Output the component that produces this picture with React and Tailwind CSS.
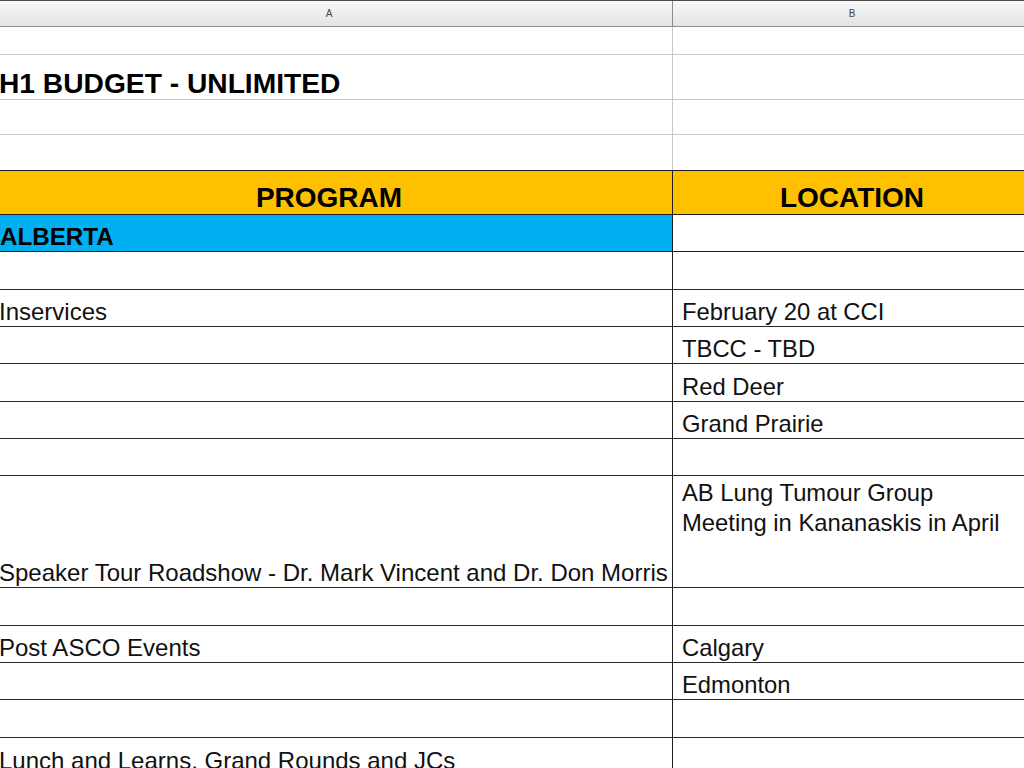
import React from 'react';

const rows = [
  { h: 'h-[28px]', line: 'border-[#c8c8c8]' },
  { h: 'h-[45px]', line: 'border-[#c8c8c8]', a: 'H1 BUDGET - UNLIMITED', title: true },
  { h: 'h-[35px]', line: 'border-[#c8c8c8]' },
  { h: 'h-[36px]', line: 'border-[#1f1f1f]', divider: 'border-[#c8c8c8]' },
];

const body = [
  { h: 'h-[38px]' },
  { h: 'h-[37px]', a: 'Inservices', b: 'February 20 at CCI' },
  { h: 'h-[37px]', b: 'TBCC - TBD' },
  { h: 'h-[38px]', b: 'Red Deer' },
  { h: 'h-[37px]', b: 'Grand Prairie' },
  { h: 'h-[37px]' },
  {
    h: 'h-[112px]',
    a: 'Speaker Tour Roadshow - Dr. Mark Vincent and Dr. Don Morris',
    b: ['AB Lung Tumour Group', 'Meeting in Kananaskis in April'],
  },
  { h: 'h-[38px]' },
  { h: 'h-[37px]', a: 'Post ASCO Events', b: 'Calgary' },
  { h: 'h-[37px]', b: 'Edmonton' },
  { h: 'h-[38px]' },
  { h: 'h-[38px]', a: 'Lunch and Learns, Grand Rounds and JCs' },
];

const App = () => {
  return (
    <div className="w-[1024px] h-[768px] overflow-hidden bg-white font-['Liberation_Sans',Arial,sans-serif] text-[#111]">
      <div className="-ml-[14px] w-[1045px]">
        {/* column header */}
        <div className="flex h-[27px] border-t border-b border-t-[#4a4a4a] border-b-[#8c8c8c] bg-linear-to-b from-[#f9f9f9] to-[#e3e3e3]">
          <div className="w-[687px] shrink-0 border-r border-[#8c8c8c] flex items-center justify-center text-[10px] text-[#444]">
            A
          </div>
          <div className="w-[358px] shrink-0 flex items-center justify-center text-[10px] text-[#444]">
            B
          </div>
        </div>

        {rows.map((r, i) => (
          <div key={i} className={`flex border-b ${r.h} ${r.line}`}>
            <div className={`w-[687px] shrink-0 border-r ${r.divider || 'border-[#c8c8c8]'} flex items-end pl-[13px]`}>
              {r.a && (
                <span className="text-[28.2px] leading-[32px] font-bold text-black whitespace-nowrap">{r.a}</span>
              )}
            </div>
            <div className="w-[358px] shrink-0" />
          </div>
        ))}

        {/* header band */}
        <div className="flex h-[44px] border-b border-[#1f1f1f] bg-[#ffc000]">
          <div className="w-[687px] shrink-0 border-r border-[#1f1f1f] flex items-end justify-center">
            <span className="text-[28px] leading-[32px] font-bold text-black">PROGRAM</span>
          </div>
          <div className="w-[358px] shrink-0 flex items-end justify-center">
            <span className="text-[28px] leading-[32px] font-bold text-black">LOCATION</span>
          </div>
        </div>

        <div className="flex h-[37px] border-b border-[#1f1f1f]">
          <div className="w-[687px] shrink-0 border-r border-[#1f1f1f] bg-[#00b0f0] flex items-end pl-[14px]">
            <span className="text-[24.2px] leading-[28px] font-bold text-black">ALBERTA</span>
          </div>
          <div className="w-[358px] shrink-0" />
        </div>

        {body.map((r, i) => (
          <div key={i} className={`flex border-b border-[#2a2a2a] ${r.h}`}>
            <div className="w-[687px] shrink-0 border-r border-[#1f1f1f] flex items-end pl-[13px]">
              {r.a && <span className="text-[24px] leading-[28px] whitespace-nowrap">{r.a}</span>}
            </div>
            <div className={`w-[358px] shrink-0 flex pl-[9px] ${Array.isArray(r.b) ? 'items-start pt-[2px]' : 'items-end'}`}>
              {Array.isArray(r.b) ? (
                <div className="text-[23.8px] leading-[30px]">
                  {r.b.map(line => (
                    <div key={line} className="whitespace-nowrap">{line}</div>
                  ))}
                </div>
              ) : (
                r.b && <span className="text-[23.8px] leading-[28px] whitespace-nowrap">{r.b}</span>
              )}
            </div>
          </div>
        ))}
      </div>
    </div>
  );
};

export default App;
